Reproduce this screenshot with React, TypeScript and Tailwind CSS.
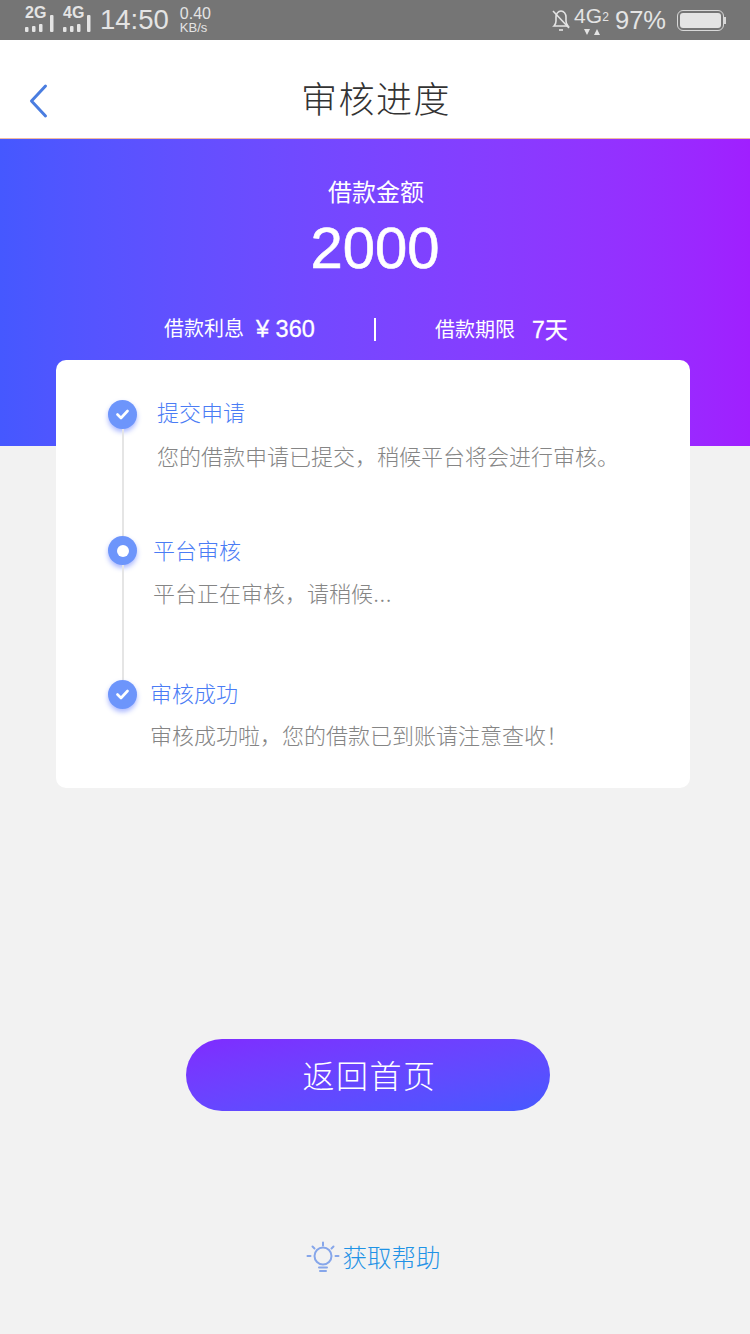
const cjk = "font-['Inter','Noto_Sans_CJK_SC',sans-serif]";
const latin = "font-['Liberation_Sans','Noto_Sans_CJK_SC',sans-serif]";

function Signal({ label, tall }: { label: string; tall: number }) {
  return (
    <div className="relative h-[26px] w-[30px]">
      <span className="absolute left-0 top-[-3px] font-['Liberation_Sans',sans-serif] text-[16px] font-bold leading-[18px] text-[#e4e4e4]">{label}</span>
      <svg width="30" height="26" viewBox="0 0 30 26" className="absolute left-0 top-0">
        <g fill="#e4e4e4">
          <rect x="0" y="20" width="3.500" height="5" rx="1" />
          <rect x="7" y="19" width="3.500" height="6" rx="1" />
          <rect x="14" y="17" width="3.500" height="8" rx="1" />
          <rect x={tall} y="8" width="3.500" height="17" rx="1" />
        </g>
      </svg>
    </div>
  );
}

function StatusBar() {
  return (
    <div className="flex h-[40px] items-center justify-between bg-[#757575] pl-[25px] pr-[24px] font-['Liberation_Sans',sans-serif] text-[#e4e4e4]">
      <div className="flex items-center">
        <div className="flex gap-[8px]">
          <Signal label="2G" tall={25} />
          <Signal label="4G" tall={24} />
        </div>
        <span className="ml-[7px] text-[27.500px] leading-[32px]">14:50</span>
        <div className="ml-[11px] flex flex-col text-[13px] leading-[13px]">
          <span className="text-[16px] leading-[14px]">0.40</span>
          <span>KB/s</span>
        </div>
      </div>
      <div className="flex items-center">
        <svg width="20" height="24" viewBox="0 0 20 24" fill="none" stroke="#e4e4e4" strokeWidth="1.6">
          <path d="M3 18c1.500-1.500 2-3 2-5V9c0-3 2-6 5-6s5 3 5 6v4c0 2 .5 3.500 2 5z" />
          <path d="M2 3l16 17" />
          <path d="M8 22h4" />
        </svg>
        <div className="relative ml-[3px] h-[32px] w-[35px]">
          <span className="absolute left-0 top-[-1px] text-[21px] leading-[26px]">4G</span>
          <span className="absolute right-0 top-[6px] text-[12px] leading-[14px]">2</span>
          <svg width="16" height="7" viewBox="0 0 16 7" className="absolute left-[10px] top-[25px]" fill="#e4e4e4">
            <path d="M0 0h6L3 6zM10 6h6l-3-6z" />
          </svg>
        </div>
        <span className="ml-[6px] text-[25.500px] leading-[32px]">97%</span>
        <div className="ml-[11px] flex items-center">
          <div className="flex h-[21px] w-[47px] items-center rounded-[6px] border-[1.5px] border-[#d8d8d8] p-[2px]">
            <div className="h-full w-full rounded-[3px] bg-[#e4e4e4]" />
          </div>
          <div className="h-[7px] w-[2px] bg-[#d8d8d8]" />
        </div>
      </div>
    </div>
  );
}

function Nav() {
  return (
    <div className="relative flex h-[99px] items-center justify-center border-b border-b-[#f0b9a0] bg-white pt-[22px]">
      <svg width="22" height="36" viewBox="0 0 22 36" fill="none" stroke="#4a7de0" strokeWidth="3" strokeLinecap="round" strokeLinejoin="round" className="absolute left-[27px] top-[43px]">
        <path d="M18.500 3L4.500 18l14 15" />
      </svg>
      <span className="pl-[2px] text-[36px] font-light leading-[48px] tracking-[1.500px] text-[#333333]">审核进度</span>
    </div>
  );
}

function Check() {
  return (
    <svg width="13" height="11" viewBox="0 0 13 11" fill="none" stroke="#fff" strokeWidth="2.600" strokeLinecap="round" strokeLinejoin="round">
      <path d="M1.500 5.500l3.500 3.500 6.500-7" />
    </svg>
  );
}

function Step({ active, title, desc, height, gap, line }: { active?: boolean; title: string; desc: string; height: string; gap: string; line: boolean }) {
  return (
    <div className={`flex ${height}`}>
      <div className="flex w-[29px] shrink-0 flex-col items-center">
        <div className="flex h-[29px] w-[29px] items-center justify-center rounded-full bg-[#6d95fb] shadow-[0_3px_5px_rgba(70,100,255,0.45)]">
          {active ? <div className="h-[12px] w-[12px] rounded-full bg-white" /> : <Check />}
        </div>
        {line && <div className="w-[2px] flex-1 bg-[#e5e5e5]" />}
      </div>
      <div className={`${gap} flex flex-col`}>
        <span className="text-[22px] font-light leading-[28px] text-[#4a7cf5]">{title}</span>
        <span className="whitespace-nowrap text-[22px] font-light leading-[28px] text-[#858585]">{desc}</span>
      </div>
    </div>
  );
}

export default function App() {
  return (
    <div className={`flex h-[1334px] w-[750px] flex-col overflow-hidden bg-[#f2f2f2] ${cjk}`}>
      <StatusBar />
      <Nav />
      <div className="flex h-[307px] flex-col items-center bg-gradient-to-r from-[#4558ff] to-[#a01fff] pt-[38px] text-white">
        <span className="pl-[2px] text-[24px] leading-[32px]">借款金额</span>
        <span className={`${latin} mt-[7px] text-[58px] leading-[64px] [-webkit-text-stroke:0.6px_white]`}>2000</span>
        <div className="mt-[34px] flex w-full items-center">
          <div className="flex w-[374px] items-center pl-[164px]">
            <span className="text-[20px] leading-[28px]">借款利息</span>
            <span className={`${latin} ml-[12px] text-[23.500px] leading-[28px] [-webkit-text-stroke:0.3px_white]`}>¥ 360</span>
          </div>
          <div className="h-[23px] w-[2px] bg-white" />
          <div className="flex items-center pl-[59px] pt-[2px]">
            <span className="text-[20px] leading-[28px]">借款期限</span>
            <span className={`${latin} ml-[17px] text-[23px] leading-[28px] [-webkit-text-stroke:0.3px_white]`}>7天</span>
          </div>
        </div>
      </div>
      <div className="ml-[56px] -mt-[86px] h-[428px] w-[634px] rounded-[10px] bg-white pl-[52px] pt-[40px]">
        <Step title="提交申请" desc="您的借款申请已提交，稍候平台将会进行审核。" height="h-[136px]" gap="ml-[20px] -mt-[1px] gap-[16px]" line />
        <Step active title="平台审核" desc="平台正在审核，请稍候..." height="h-[144px]" gap="ml-[16px] mt-[1px] gap-[15px]" line />
        <Step title="审核成功" desc="审核成功啦，您的借款已到账请注意查收！" height="h-[108px]" gap="ml-[13px] mt-0 gap-[14px]" line={false} />
      </div>
      <button className="ml-[186px] mt-[251px] flex h-[72px] w-[364px] items-center justify-center rounded-full bg-gradient-to-br from-[#7f2bff] to-[#4558ff] pl-[3px] pt-[3px] text-[32px] font-light tracking-[1.500px] text-white">
        返回首页
      </button>
      <div className="ml-[306px] mt-[130px] flex items-center">
        <svg width="34" height="34" viewBox="0 0 34 34" fill="none" stroke="#86a6ea" strokeWidth="2" strokeLinecap="round">
          <circle cx="17" cy="15" r="8.500" />
          <path d="M17 1.500v3M6.500 5.500l2 2M27.500 5.500l-2 2M1.500 15h3M29.500 15h3M13 26.500h8M14 30h6" />
        </svg>
        <span className="ml-[2.500px] text-[24.500px] font-light leading-[32px] text-[#1f93e6]">获取帮助</span>
      </div>
    </div>
  );
}
